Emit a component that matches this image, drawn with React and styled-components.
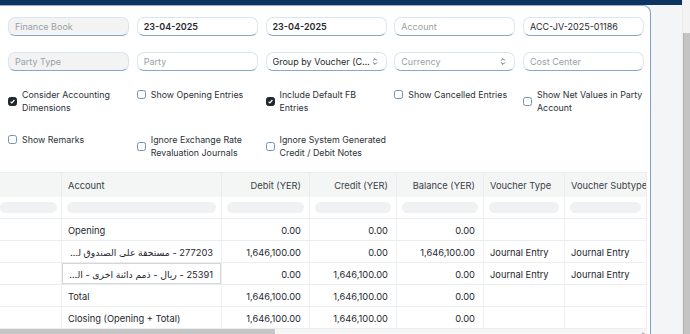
import styled, { createGlobalStyle } from "styled-components";

const GlobalStyle = createGlobalStyle`
  body {
    margin: 0;
    overflow: hidden;
    background: #f4f5f6;
    font-family: Inter, "Noto Sans", "DejaVu Sans", sans-serif;
    color: #1f272e;
  }
`;

const COLS = "62px 160px 88px 87px 87px 81px 82px";

const filtersTop = [
  { text: "", muted: true, ph: true },
  { text: "Finance Book", muted: true, ph: true },
  { text: "23-04-2025", bold: true },
  { text: "23-04-2025", bold: true },
  { text: "Account", ph: true },
  { text: "ACC-JV-2025-01186" },
];

const filtersBottom = [
  { text: "", muted: true, ph: true },
  { text: "Party Type", muted: true, ph: true },
  { text: "Party", ph: true },
  { text: "Group by Voucher (Consolidated)", select: true },
  { text: "Currency", ph: true, select: true },
  { text: "Cost Center", ph: true },
];

const checks = [
  [
    { label: "Consider Accounting Dimensions", on: true },
    { label: "Show Opening Entries" },
    { label: "Include Default FB Entries", on: true },
    { label: "Show Cancelled Entries" },
    { label: "Show Net Values in Party Account" },
  ],
  [
    { label: "Show Remarks" },
    { label: "Ignore Exchange Rate Revaluation Journals" },
    { label: "Ignore System Generated Credit / Debit Notes" },
  ],
];

const headers = ["", "Account", "Debit (YER)", "Credit (YER)", "Balance (YER)", "Voucher Type", "Voucher Subtype"];

const rows = [
  { account: "Opening", debit: "0.00", credit: "0.00", balance: "0.00" },
  {
    account: "277203 - مستحقة على الصندوق لدى أمين الصندوق",
    rtl: true,
    debit: "1,646,100.00",
    credit: "0.00",
    balance: "1,646,100.00",
    vt: "Journal Entry",
    vs: "Journal Entry",
  },
  {
    account: "25391 - ريال - ذمم دائنة اخرى - الشركة",
    rtl: true,
    focus: true,
    debit: "0.00",
    credit: "1,646,100.00",
    balance: "0.00",
    vt: "Journal Entry",
    vs: "Journal Entry",
  },
  { account: "Total", debit: "1,646,100.00", credit: "1,646,100.00", balance: "0.00" },
  { account: "Closing (Opening + Total)", debit: "1,646,100.00", credit: "1,646,100.00", balance: "0.00" },
];

const SelectArrow = () => (
  <svg width="6" height="9" viewBox="0 0 6 9" fill="none">
    <path d="M1.2 3.4 L3 1.6 L4.8 3.4 M1.2 5.6 L3 7.4 L4.8 5.6" stroke="#4a525a" strokeWidth="0.9" />
  </svg>
);

const Check = () => (
  <svg width="9" height="9" viewBox="0 0 9 9" fill="none">
    <path d="M2.6 4.8 L3.9 6 L6.4 3" stroke="#fff" strokeWidth="1.2" />
  </svg>
);

const App = () => {
  return (
    <Page>
      <GlobalStyle />
      <Main>
        <TopBar />
        <Body>
          <Card>
            <FilterGrid>
              {filtersTop.map((f, i) => (
                <Field key={i} $muted={f.muted} $ph={f.ph} $bold={f.bold}>
                  <FieldText>{f.text}</FieldText>
                  {f.select && <SelectArrow />}
                </Field>
              ))}
            </FilterGrid>
            <FilterGrid $second>
              {filtersBottom.map((f, i) => (
                <Field key={i} $muted={f.muted} $ph={f.ph} $bold={f.bold} $select={f.select}>
                  <FieldText>{f.text}</FieldText>
                  {f.select && <SelectArrow />}
                </Field>
              ))}
            </FilterGrid>

            {checks.map((row, r) => (
              <CheckGrid key={r} $first={r === 0}>
                {row.map((c) => (
                  <CheckItem key={c.label}>
                    <Box $on={c.on}>{c.on && <Check />}</Box>
                    <CheckLabel>{c.label}</CheckLabel>
                  </CheckItem>
                ))}
              </CheckGrid>
            ))}

            <Table>
              <HeadRow>
                {headers.map((h, i) => (
                  <HeadCell key={i} $num={i >= 2 && i <= 4}>
                    {h}
                  </HeadCell>
                ))}
              </HeadRow>
              <FilterRow>
                {headers.map((h, i) => (
                  <FilterCell key={i} $first={i === 0}>
                    <Pill />
                  </FilterCell>
                ))}
              </FilterRow>
              {rows.map((r, i) => (
                <Row key={i}>
                  <Cell />
                  <Cell $focus={r.focus}>
                    <CellText $rtl={r.rtl}>{r.account}</CellText>
                  </Cell>
                  <Cell $num>{r.debit}</Cell>
                  <Cell $num>{r.credit}</Cell>
                  <Cell $num>{r.balance}</Cell>
                  <Cell>{r.vt}</Cell>
                  <Cell>{r.vs}</Cell>
                </Row>
              ))}
              <HScroll>
                <HThumb />
                <HArrow>▸</HArrow>
              </HScroll>
            </Table>
          </Card>
        </Body>
      </Main>
      <VScroll>
        <VThumb />
      </VScroll>
    </Page>
  );
};

const Page = styled.div`
  display: flex;
  width: 690px;
  height: 334px;
  overflow: hidden;
`;

const Main = styled.div`
  flex: 1;
  display: flex;
  flex-direction: column;
  min-width: 0;
`;

const TopBar = styled.div`
  height: 5px;
  background: #0c3461;
  flex-shrink: 0;
`;

const Body = styled.div`
  flex: 1;
  display: flex;
  min-height: 0;
`;

const Card = styled.div`
  width: 651px;
  box-sizing: border-box;
  background: #fff;
  border-top: 1px solid #8fb0d4;
  border-right: 1px solid #7b9dc5;
  border-top-right-radius: 8px;
  padding-top: 11px;
  overflow: hidden;
`;

const FilterGrid = styled.div`
  display: grid;
  grid-template-columns: repeat(6, 121px);
  column-gap: 7.75px;
  margin-left: -120.75px;
  margin-top: ${({ $second }) => ($second ? "16px" : "0")};
`;

const Field = styled.div`
  height: 19px;
  box-sizing: border-box;
  border: 1px solid #d8e5f2;
  border-bottom-color: #88a8cb;
  border-radius: 7px;
  background: ${({ $muted }) => ($muted ? "#f3f3f3" : "#fff")};
  padding: ${({ $select }) => ($select ? "0 8px 0 6px" : "0 9px 0 6px")};
  display: flex;
  align-items: center;
  gap: 1px;
  font-size: 9px;
  font-weight: ${({ $bold }) => ($bold ? 600 : 400)};
  color: ${({ $ph }) => ($ph ? "#989fa6" : "#1f272e")};
`;

const FieldText = styled.span`
  flex: 1;
  min-width: 0;
  white-space: nowrap;
  overflow: hidden;
  text-overflow: ellipsis;
`;

const CheckGrid = styled.div`
  display: grid;
  grid-template-columns: repeat(5, 121px);
  column-gap: 7.75px;
  margin-left: 8px;
  margin-top: ${({ $first }) => ($first ? "17px" : "19px")};
  height: 26px;
`;

const CheckItem = styled.div`
  display: flex;
  align-items: center;
  align-self: start;
  gap: 5px;
`;

const Box = styled.span`
  width: 9px;
  height: 9px;
  flex-shrink: 0;
  box-sizing: border-box;
  border-radius: 2.5px;
  border: 1px solid ${({ $on }) => ($on ? "#1f272e" : "#7290b6")};
  background: ${({ $on }) => ($on ? "#1f272e" : "#fff")};
  display: flex;
  align-items: center;
  justify-content: center;

  svg {
    margin: -1px;
  }
`;

const CheckLabel = styled.span`
  width: 107px;
  font-size: 8.85px;
  line-height: 13px;
  color: #2b3238;
`;

const Table = styled.div`
  width: 647px;
  margin-top: 13px;
  font-size: 9.3px;
  color: #1f272e;
`;

const HeadRow = styled.div`
  display: grid;
  grid-template-columns: ${COLS};
  height: 25px;
  box-sizing: border-box;
  background: #f4f5f5;
  border-top: 1px solid #ebeef0;
`;

const HeadCell = styled.div`
  display: flex;
  align-items: center;
  justify-content: ${({ $num }) => ($num ? "flex-end" : "flex-start")};
  padding: 0 8px 0 6px;
  border-right: 1px solid #e9ecee;
  color: #383f45;
  white-space: nowrap;
  overflow: hidden;
`;

const FilterRow = styled.div`
  display: grid;
  grid-template-columns: ${COLS};
  height: 22px;
  box-sizing: border-box;
  border-bottom: 1px solid #ebeef0;
`;

const FilterCell = styled.div`
  display: flex;
  align-items: center;
  padding: ${({ $first }) => ($first ? "0 4px 0 0" : "0 5px")};
  border-right: 1px solid #eef0f2;
`;

const Pill = styled.div`
  flex: 1;
  height: 11px;
  border-radius: 6px;
  background: #f0f1f2;
`;

const Row = styled.div`
  display: grid;
  grid-template-columns: ${COLS};
  height: 22px;
  box-sizing: border-box;
  border-bottom: 1px solid #ebeef0;
`;

const Cell = styled.div`
  display: flex;
  align-items: center;
  justify-content: ${({ $num }) => ($num ? "flex-end" : "flex-start")};
  padding: 2px 8px 0 6px;
  min-width: 0;
  border-right: 1px solid #eef0f2;
  white-space: nowrap;
  overflow: hidden;
  box-shadow: ${({ $focus }) => ($focus ? "inset 0 0 0 1px #d3d7da" : "none")};
`;

const CellText = styled.span`
  display: block;
  width: 100%;
  overflow: hidden;
  white-space: nowrap;
  text-overflow: ellipsis;
  direction: ${({ $rtl }) => ($rtl ? "rtl" : "ltr")};
  text-align: left;
`;

const HScroll = styled.div`
  height: 6px;
  display: flex;
  align-items: center;
  background: #f6f6f6;
`;

const HThumb = styled.div`
  width: 275px;
  height: 6px;
  background: #c6c6c6;
`;

const HArrow = styled.span`
  margin-left: auto;
  margin-right: 2px;
  font-size: 6px;
  color: #b8b8b8;
`;

const VScroll = styled.div`
  width: 8px;
  flex-shrink: 0;
  display: flex;
  flex-direction: column;
  padding-top: 33px;
  box-sizing: border-box;
  background: #f3f3f3;
  border-left: 1px solid #ececec;
`;

const VThumb = styled.div`
  flex: 1;
  background: #c4c4c4;
  border-left: 1px solid #b4b4b4;
`;

export default App;
